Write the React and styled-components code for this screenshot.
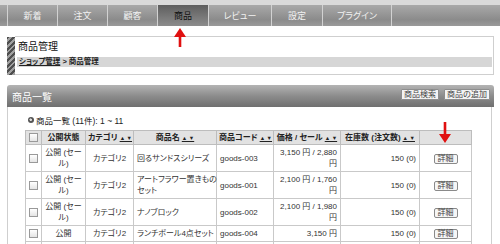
import React from "react";
import styled, { createGlobalStyle } from "styled-components";

// constants
const TABS = [
  { label: "新着", width: 50 },
  { label: "注文", width: 50 },
  { label: "顧客", width: 50 },
  { label: "商品", width: 51, active: true },
  { label: "レビュー", width: 63 },
  { label: "設定", width: 51 },
  { label: "プラグイン", width: 70 },
];

const COLUMNS = [
  { title: "", width: 16 },
  { title: "公開状態", width: 44 },
  { title: "カテゴリ", width: 48, sort: true },
  { title: "商品名", width: 83, sort: true },
  { title: "商品コード", width: 57, sort: true },
  { title: "価格 / セール", width: 67, sort: true },
  { title: "在庫数 (注文数)", width: 79, sort: true },
  { title: "", width: 52 },
];

const PRODUCTS = [
  {
    status: ["公開 (セー", "ル)"],
    name: ["回るサンドスシリーズ"],
    code: "goods-003",
    price: ["3,150 円 / 2,880", "円"],
  },
  {
    status: ["公開 (セー", "ル)"],
    name: ["アートフラワー置きもの", "セット"],
    code: "goods-001",
    price: ["2,100 円 / 1,760", "円"],
  },
  {
    status: ["公開 (セー", "ル)"],
    name: ["ナノブロック"],
    code: "goods-002",
    price: ["2,100 円 / 1,980", "円"],
  },
  {
    status: ["公開"],
    name: ["ランチボール4点セット"],
    code: "goods-004",
    price: ["3,150 円"],
  },
];

const GlobalStyle = createGlobalStyle`
  body {
    margin: 0;
    background: #fff;
    font-family: "Liberation Sans", "Noto Sans CJK JP", sans-serif;
    font-feature-settings: "palt";
    color: #222;
  }
`;

const Page = styled.div`
  position: relative;
  width: 500px;
  height: 244px;
  overflow: hidden;
`;

const TopStrip = styled.div`
  height: 5px;
  background: #dadada;
`;

const NavBar = styled.nav`
  display: flex;
  height: 21px;
  padding-left: 7px;
  background: linear-gradient(#a9a9a9, #8b8b8b 70%, #9a9a9a);
`;

const Tab = styled.div`
  box-sizing: border-box;
  width: ${(p) => p.$width}px;
  border-left: 1px solid #d2d2d2;
  display: flex;
  align-items: center;
  justify-content: center;
  font-size: 9px;
  color: ${(p) => (p.$active ? "#111" : "#f2f2f2")};
  background: ${(p) =>
    p.$active ? "linear-gradient(#5e5e5e, #7a7a7a 60%, #8c8c8c)" : "transparent"};

  &:last-child {
    border-right: 1px solid #d2d2d2;
  }
`;

const Arrow = styled.svg`
  position: absolute;
  left: ${(p) => p.$x}px;
  top: ${(p) => p.$y}px;
`;

const Main = styled.main`
  padding: 10px 6px 0 7px;
`;

const ManagePanel = styled.section`
  display: flex;
`;

const Stripe = styled.div`
  width: 8px;
  margin-top: 1px;
  background: repeating-linear-gradient(135deg, #4e4e4e 0 2px, #a0a0a0 2px 4px);
`;

const ManageBox = styled.div`
  flex: 1;
  height: 37px;
  border: 1px solid #cfcfcf;
  border-left: none;
  padding: 0 1px 0 2px;
`;

const ManageTitle = styled.h1`
  margin: 0;
  height: 20px;
  line-height: 20px;
  padding-left: 1px;
  font-size: 10px;
  font-weight: normal;
  color: #111;
`;

const Breadcrumb = styled.div`
  height: 10px;
  line-height: 10px;
  padding-left: 2px;
  background: #d6d6d6;
  font-size: 7.5px;
  font-weight: bold;
  color: #222;
`;

const CrumbLink = styled.span`
  text-decoration: underline;
`;

const ListHeader = styled.div`
  margin-top: 10px;
  height: 22px;
  display: flex;
  align-items: center;
  justify-content: space-between;
  padding: 0 4px 0 5px;
  border-radius: 3px 3px 0 0;
  background: linear-gradient(#b4b4b4, #8c8c8c 50%, #6f6f6f);
`;

const ListTitle = styled.h2`
  margin: 0;
  font-size: 10px;
  font-weight: normal;
  color: #fff;
`;

const HeaderButtons = styled.div`
  display: flex;
  gap: 5px;
  margin-top: -3px;
`;

const SmallButton = styled.button`
  height: 11px;
  padding: 0 2px;
  border: 1px solid #8e8e8e;
  border-radius: 1px;
  background: #f3f3f3;
  font-family: inherit;
  font-size: 8px;
  line-height: 9px;
  color: #444;
`;

const ListBody = styled.div`
  margin-right: 2px;
  height: 150px;
  border-left: 1px solid #cfcfcf;
  border-right: 1px solid #cfcfcf;
  padding: 8px 0 0 17px;
`;

const CountLine = styled.div`
  display: flex;
  align-items: center;
  gap: 2px;
  height: 10px;
  margin-left: 3px;
  font-size: 8.5px;
  color: #222;
`;

const Bullet = styled.span`
  width: 6px;
  height: 6px;
  border-radius: 50%;
  background: radial-gradient(circle at 45% 45%, #ddd 0 1px, #555 1.5px);
`;

const Table = styled.table`
  margin-top: 5px;
  width: 446px;
  table-layout: fixed;
  border-collapse: collapse;
  font-size: 8px;
  line-height: 11px;
`;

const HeadCell = styled.th`
  height: 13px;
  padding: 0 2px;
  background: #e2e2e2;
  border: 1px solid #bdbdbd;
  font-weight: bold;
  color: #222;
  white-space: nowrap;
  text-align: center;
`;

const Sort = styled.span`
  font-size: 5.5px;
  margin-left: 2px;
  text-decoration: underline;
`;

const Cell = styled.td`
  padding: 2px 3px;
  border: 1px solid #c9c9c9;
  color: #333;
  text-align: ${(p) => p.$align || "left"};
  white-space: nowrap;
  vertical-align: middle;
`;

const EmptyCell = styled.td`
  height: 12px;
  border: 1px solid #c9c9c9;
`;

const Check = styled.span`
  display: inline-block;
  width: 7px;
  height: 7px;
  border: 1px solid #999;
  background: linear-gradient(#fff, #e4e4e4);
  vertical-align: middle;
`;

const DetailButton = styled.button`
  height: 10px;
  padding: 0 3px;
  border: 1px solid #8a8a8a;
  border-radius: 2px;
  background: #f6f6f6;
  font-family: inherit;
  font-size: 8px;
  line-height: 8px;
  color: #444;
`;

function Lines({ items }) {
  return items.map((line, index) => (
    <React.Fragment key={index}>
      {index > 0 && <br />}
      {line}
    </React.Fragment>
  ));
}

function RedArrow({ x, y, length }) {
  return (
    <Arrow $x={x} $y={y} width="12" height={length} viewBox={`0 0 12 ${length}`}>
      <rect x="4.7" y="0" width="2.6" height={length - 7} fill="#e01010" />
      <polygon points={`0,${length - 9} 12,${length - 9} 6,${length}`} fill="#e01010" />
    </Arrow>
  );
}

export default function App() {
  return (
    <Page>
      <GlobalStyle />
      <TopStrip />
      <NavBar>
        {TABS.map((tab) => (
          <Tab key={tab.label} $width={tab.width} $active={tab.active}>
            {tab.label}
          </Tab>
        ))}
      </NavBar>

      {/* arrow under the 商品 tab, pointing up */}
      <Arrow $x={174} $y={28} width="12" height="19" viewBox="0 0 12 19">
        <polygon points="6,0 12,9 0,9" fill="#e01010" />
        <rect x="4.7" y="8" width="2.6" height="11" fill="#e01010" />
      </Arrow>

      <Main>
        <ManagePanel>
          <Stripe />
          <ManageBox>
            <ManageTitle>商品管理</ManageTitle>
            <Breadcrumb>
              <CrumbLink>ショップ管理</CrumbLink> &gt; 商品管理
            </Breadcrumb>
          </ManageBox>
        </ManagePanel>

        <ListHeader>
          <ListTitle>商品一覧</ListTitle>
          <HeaderButtons>
            <SmallButton>商品検索</SmallButton>
            <SmallButton>商品の追加</SmallButton>
          </HeaderButtons>
        </ListHeader>

        <ListBody>
          <CountLine>
            <Bullet />
            商品一覧 (11件): 1 ~ 11
          </CountLine>
          <Table>
            <colgroup>
              {COLUMNS.map((col, index) => (
                <col key={index} style={{ width: col.width }} />
              ))}
            </colgroup>
            <thead>
              <tr>
                <HeadCell>
                  <Check />
                </HeadCell>
                {COLUMNS.slice(1).map((col, index) => (
                  <HeadCell key={index}>
                    {col.title}
                    {col.sort && <Sort>▲ ▼</Sort>}
                  </HeadCell>
                ))}
              </tr>
            </thead>
            <tbody>
              {PRODUCTS.map((item) => (
                <tr key={item.code}>
                  <Cell $align="center">
                    <Check />
                  </Cell>
                  <Cell $align="center">
                    <Lines items={item.status} />
                  </Cell>
                  <Cell $align="center">カテゴリ2</Cell>
                  <Cell>
                    <Lines items={item.name} />
                  </Cell>
                  <Cell>{item.code}</Cell>
                  <Cell $align="right">
                    <Lines items={item.price} />
                  </Cell>
                  <Cell $align="right">150 (0)</Cell>
                  <Cell $align="center">
                    <DetailButton>詳細</DetailButton>
                  </Cell>
                </tr>
              ))}
              {/* next row, cut off by the bottom of the window */}
              <tr>
                {COLUMNS.map((col, index) => (
                  <EmptyCell key={index} />
                ))}
              </tr>
            </tbody>
          </Table>
        </ListBody>
      </Main>

      <RedArrow x={439} y={122} length={21} />
    </Page>
  );
}
